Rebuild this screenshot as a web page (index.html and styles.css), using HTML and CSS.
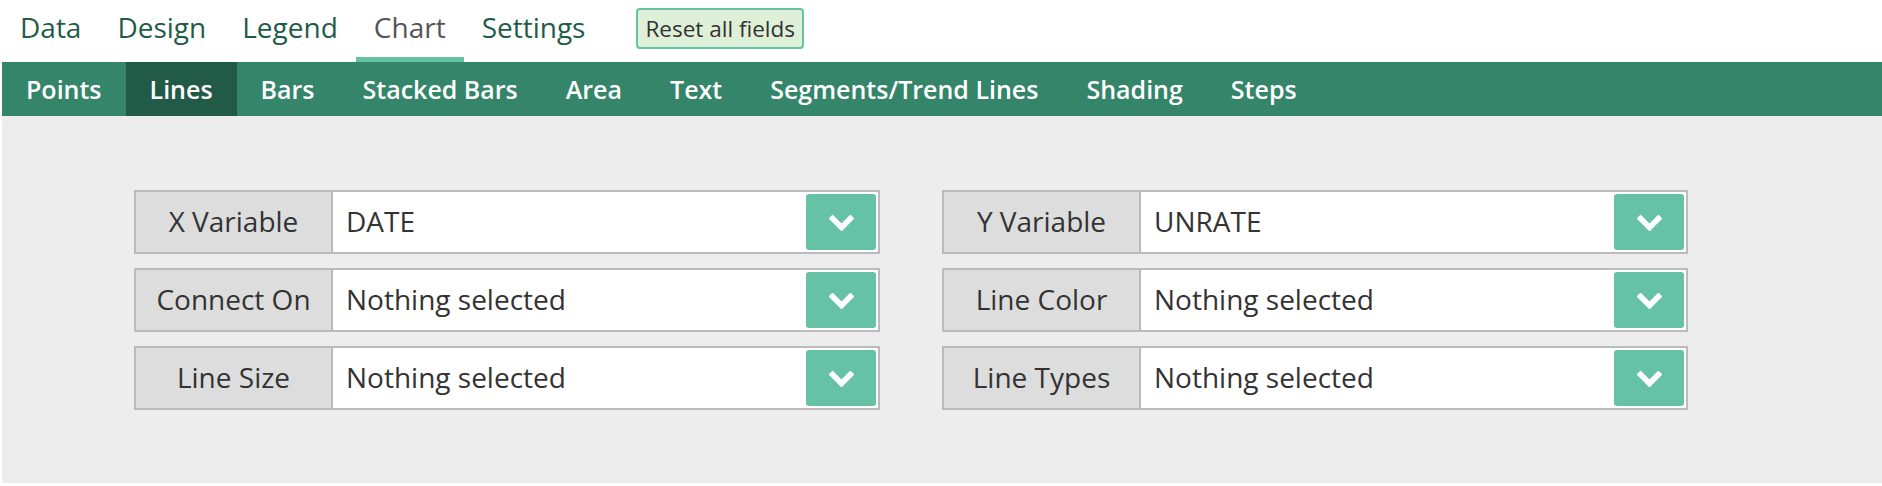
FILE: index.html
```html
<!DOCTYPE html>
<html>
<head>
<meta charset="utf-8">
<link rel="stylesheet" href="styles.css">
</head>
<body>
<div class="app">
  <nav class="topnav">
    <a class="toptab">Data</a>
    <a class="toptab">Design</a>
    <a class="toptab">Legend</a>
    <a class="toptab active">Chart</a>
    <a class="toptab">Settings</a>
    <button class="reset">Reset all fields</button>
  </nav>
  <nav class="subnav">
    <a class="subtab">Points</a>
    <a class="subtab active">Lines</a>
    <a class="subtab">Bars</a>
    <a class="subtab">Stacked Bars</a>
    <a class="subtab">Area</a>
    <a class="subtab">Text</a>
    <a class="subtab">Segments/Trend Lines</a>
    <a class="subtab">Shading</a>
    <a class="subtab">Steps</a>
  </nav>
  <main class="panel">
    <div class="col">
      <div class="row"><div class="label">X Variable</div><div class="field"><span class="value">DATE</span><span class="btn"><svg class="chev" viewBox="90 533 1612 1035" width="25" height="16"><path d="M1683 808l-742 741q-19 19-45 19t-45-19l-742-741q-19-19-19-45.5t19-45.5l166-165q19-19 45-19t45 19l531 531 531-531q19-19 45-19t45 19l166 165q19 19 19 45.5t-19 45.5z"/></svg></span></div></div>
      <div class="row"><div class="label">Connect On</div><div class="field"><span class="value">Nothing selected</span><span class="btn"><svg class="chev" viewBox="90 533 1612 1035" width="25" height="16"><path d="M1683 808l-742 741q-19 19-45 19t-45-19l-742-741q-19-19-19-45.5t19-45.5l166-165q19-19 45-19t45 19l531 531 531-531q19-19 45-19t45 19l166 165q19 19 19 45.5t-19 45.5z"/></svg></span></div></div>
      <div class="row"><div class="label">Line Size</div><div class="field"><span class="value">Nothing selected</span><span class="btn"><svg class="chev" viewBox="90 533 1612 1035" width="25" height="16"><path d="M1683 808l-742 741q-19 19-45 19t-45-19l-742-741q-19-19-19-45.5t19-45.5l166-165q19-19 45-19t45 19l531 531 531-531q19-19 45-19t45 19l166 165q19 19 19 45.5t-19 45.5z"/></svg></span></div></div>
    </div>
    <div class="col">
      <div class="row"><div class="label">Y Variable</div><div class="field"><span class="value">UNRATE</span><span class="btn"><svg class="chev" viewBox="90 533 1612 1035" width="25" height="16"><path d="M1683 808l-742 741q-19 19-45 19t-45-19l-742-741q-19-19-19-45.5t19-45.5l166-165q19-19 45-19t45 19l531 531 531-531q19-19 45-19t45 19l166 165q19 19 19 45.5t-19 45.5z"/></svg></span></div></div>
      <div class="row"><div class="label">Line Color</div><div class="field"><span class="value">Nothing selected</span><span class="btn"><svg class="chev" viewBox="90 533 1612 1035" width="25" height="16"><path d="M1683 808l-742 741q-19 19-45 19t-45-19l-742-741q-19-19-19-45.5t19-45.5l166-165q19-19 45-19t45 19l531 531 531-531q19-19 45-19t45 19l166 165q19 19 19 45.5t-19 45.5z"/></svg></span></div></div>
      <div class="row"><div class="label">Line Types</div><div class="field"><span class="value">Nothing selected</span><span class="btn"><svg class="chev" viewBox="90 533 1612 1035" width="25" height="16"><path d="M1683 808l-742 741q-19 19-45 19t-45-19l-742-741q-19-19-19-45.5t19-45.5l166-165q19-19 45-19t45 19l531 531 531-531q19-19 45-19t45 19l166 165q19 19 19 45.5t-19 45.5z"/></svg></span></div></div>
    </div>
  </main>
</div>
</body>
</html>
```

FILE: styles.css
```css
html, body {
  margin: 0;
  padding: 0;
  background: #fff;
}

body {
  font-family: "Open Sans", "DejaVu Sans", sans-serif;
  color: #333;
}

.app {
  padding: 0 0 3px 2px;
}

.topnav {
  display: flex;
  align-items: flex-start;
  height: 62px;
  box-sizing: border-box;
}

.toptab {
  display: block;
  padding: 7px 18px 10px;
  line-height: 40px;
  font-size: 28px;
  color: #1f5c48;
  border-bottom: 5px solid transparent;
  cursor: pointer;
}

.toptab.active {
  color: #555;
  border-bottom-color: #66c2a5;
}

.reset {
  margin: 8px 0 0 33px;
  height: 41px;
  box-sizing: border-box;
  padding: 0 7px;
  border: 2px solid #66c2a5;
  border-radius: 4px;
  background: #dff0d8;
  font-family: "Open Sans", "DejaVu Sans", sans-serif;
  font-size: 22.5px;
  line-height: 37px;
  color: #333;
}

.subnav {
  display: flex;
  height: 54px;
  background: #348569;
}

.subtab {
  display: block;
  padding: 0 24px;
  line-height: 54px;
  font-size: 25px;
  font-weight: 600;
  color: #fff;
}

.subtab.active {
  background: #215a47;
}

.panel {
  display: flex;
  gap: 62px;
  background: #ededed;
  padding: 74px 0 73px 132px;
}

.col {
  width: 746px;
  display: flex;
  flex-direction: column;
  gap: 14px;
}

.row {
  display: flex;
  height: 64px;
  box-sizing: border-box;
  border: 2px solid #bbb;
  background: #fff;
}

.label {
  width: 197px;
  flex: none;
  background: #ddd;
  border-right: 2px solid #bbb;
  display: flex;
  align-items: center;
  justify-content: center;
  padding-bottom: 2px;
  box-sizing: border-box;
  font-size: 28px;
  color: #333;
}

.field {
  flex: 1;
  display: flex;
  align-items: center;
  padding: 2px;
}

.value {
  flex: 1;
  padding-left: 11px;
  padding-bottom: 2px;
  font-size: 28px;
  color: #333;
}

.btn {
  width: 70px;
  height: 56px;
  flex: none;
  background: #66c2a5;
  border-radius: 3px;
  display: flex;
  align-items: center;
  justify-content: center;
}

.chev {
  fill: #fff;
  margin-top: 2px;
}
```
